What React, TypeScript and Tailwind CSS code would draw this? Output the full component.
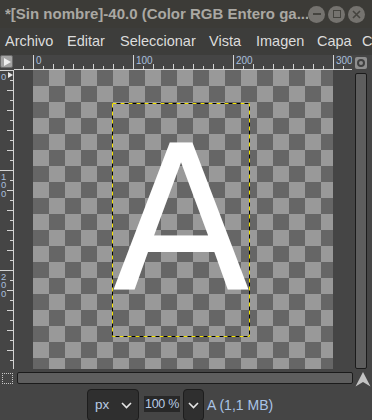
import React from "react";

const sans = "font-['Liberation_Sans',sans-serif]";

const menuItems = [
  { label: "Archivo", w: "w-[62px]" },
  { label: "Editar", w: "w-[53px]" },
  { label: "Seleccionar", w: "w-[89px]" },
  { label: "Vista", w: "w-[47px]" },
  { label: "Imagen", w: "w-[61px]" },
  { label: "Capa", w: "w-[45px]" },
  { label: "C", w: "w-[20px]" },
];

function TitleBar() {
  return (
    <div className="flex h-[28px] items-center bg-[#3c3b37] pl-[5px]">
      <span className="w-[303px] shrink-0 overflow-hidden whitespace-nowrap text-[15px] font-bold text-[#aaa8a3]">
        *[Sin nombre]-40.0 (Color RGB Entero ga...
      </span>
      <div className="flex gap-[3px]">
        <span className="flex h-[17px] w-[17px] items-center justify-center rounded-full bg-[#75736f]">
          <span className="h-[2px] w-[8px] bg-[#45443f]" />
        </span>
        <span className="flex h-[17px] w-[17px] items-center justify-center rounded-full bg-[#75736f]">
          <span className="h-[8px] w-[8px] border-[1.5px] border-[#45443f]" />
        </span>
        <span className="flex h-[17px] w-[17px] items-center justify-center rounded-full bg-[#75736f]">
          <svg width="9" height="9" viewBox="0 0 9 9">
            <path d="M1 1L8 8M8 1L1 8" stroke="#45443f" strokeWidth="1.6" />
          </svg>
        </span>
      </div>
    </div>
  );
}

function MenuBar() {
  return (
    <div className="flex h-[27px] items-center overflow-hidden whitespace-nowrap bg-[#3d3d3b] pl-[5px] text-[14.5px] text-[#dcdcdc]">
      {menuItems.map((m) => (
        <span key={m.label} className={`${m.w} shrink-0`}>
          {m.label}
        </span>
      ))}
    </div>
  );
}

function HRuler() {
  const ticks = [];
  const labels = [];
  for (let u = -10; u <= 318; u += 10) {
    const x = 19.5 + u;
    const y1 = u % 100 === 0 ? 0 : u % 20 === 0 ? 9 : 11;
    ticks.push(<line key={u} x1={x} x2={x} y1={y1} y2={14} />);
    if (u % 100 === 0) {
      labels.push(
        <text key={u} x={x + 2.5} y={9} fontSize="10">
          {u}
        </text>
      );
    }
  }
  return (
    <svg width="338" height="15" className="block">
      <g stroke="#d4d4d4" strokeWidth="1">
        {ticks}
        <line x1={0} x2={338} y1={14.5} y2={14.5} />
      </g>
      <g fill="#a9bfdc" fontFamily="Liberation Sans, sans-serif">
        {labels}
      </g>
    </svg>
  );
}

function VRuler() {
  const ticks = [];
  const labels = [];
  for (let u = 0; u <= 298; u += 10) {
    const y = 0.5 + u;
    const x1 = u % 100 === 0 ? 0 : u % 20 === 0 ? 7 : 10;
    ticks.push(<line key={u} x1={x1} x2={13} y1={y} y2={y} />);
    if (u % 100 === 0) {
      String(u)
        .split("")
        .forEach((d, i) => {
          labels.push(
            <text key={`${u}-${i}`} x={1} y={u + 9.5 + i * 8.5} fontSize="9.5">
              {d}
            </text>
          );
        });
    }
  }
  return (
    <svg width="14" height="299" className="block">
      <g stroke="#d4d4d4" strokeWidth="1">
        {ticks}
        <line x1={13.5} x2={13.5} y1={0} y2={299} />
      </g>
      <polygon points="8,2 13,5 8,8" fill="#e8e8e8" />
      <g fill="#a9bfdc" fontFamily="Liberation Sans, sans-serif">
        {labels}
      </g>
    </svg>
  );
}

function Canvas() {
  return (
    <div className="h-[299px] overflow-hidden bg-[#454545] pl-[19px]">
      <div className="relative h-[300px] w-[300px] bg-[conic-gradient(#999999_25%,#666666_0_50%,#999999_0_75%,#666666_0)] bg-[length:32px_32px]">
        <div className="absolute left-[79px] top-[33px] flex h-[234px] w-[138px] justify-center">
          <span className="mt-[16px] font-['DejaVu_Sans',sans-serif] text-[202px] leading-none text-white">
            A
          </span>
          <svg width="138" height="234" className="absolute inset-0">
            <rect x="0.5" y="0.5" width="137" height="233" fill="none" stroke="#000" />
            <rect
              x="0.5"
              y="0.5"
              width="137"
              height="233"
              fill="none"
              stroke="#f5e400"
              strokeDasharray="4 4"
            />
          </svg>
        </div>
      </div>
    </div>
  );
}

function Chevron() {
  return (
    <svg width="11" height="7" viewBox="0 0 11 7">
      <path d="M1 1L5.5 5.5L10 1" fill="none" stroke="#e6e6e6" strokeWidth="1.6" />
    </svg>
  );
}

function StatusBar() {
  return (
    <div className="flex h-[33px] items-start bg-[#454545] pl-[87px] pt-[2px]">
      <div className="flex h-[32px] w-[52px] items-center justify-between rounded-[4px] border border-[#1d1d1d] bg-[#2f2f2f] pl-[7px] pr-[6px]">
        <span className="text-[13.5px] text-[#b8cbe4]">px</span>
        <Chevron />
      </div>
      <div className="ml-[5px] mt-[7px] flex h-[16px] w-[36px] items-center justify-center whitespace-nowrap bg-[#282828] text-[12.5px] tracking-[-0.3px] text-[#b8cbe4]">
        100 %
      </div>
      <div className="ml-[3px] flex h-[32px] w-[21px] items-center justify-center rounded-[4px] border border-[#1d1d1d] bg-[#2f2f2f]">
        <Chevron />
      </div>
      <span className="ml-[3px] mt-[6px] whitespace-nowrap text-[14px] text-[#a9c4e6]">A (1,1 MB)</span>
    </div>
  );
}

export default function App() {
  return (
    <div className={`h-[420px] w-[372px] overflow-hidden bg-[#454545] ${sans}`}>
      <TitleBar />
      <MenuBar />
      <div className="grid grid-cols-[14px_338px_20px] grid-rows-[15px_299px_18px]">
        <div className="h-[13px] w-[13px] rounded-[2px] border border-[#6a6a6a] bg-[#a3a3a3] p-[2px]">
          <svg width="8" height="8" viewBox="0 0 8 8">
            <polygon points="1,0 8,4 1,8" fill="#f0f0f0" />
          </svg>
        </div>
        <HRuler />
        <div className="pl-[3px] pt-[2px]">
          <div className="flex h-[12px] w-[12px] items-center justify-center rounded-[2px] bg-[#8e8e8e]">
            <span className="h-[8px] w-[8px] rounded-full border-2 border-[#404040]" />
          </div>
        </div>

        <VRuler />
        <Canvas />
        <div className="pl-[3px] pt-[3px]">
          <div className="h-[296px] w-[12px] rounded-[2px] border border-[#1b1b1b] bg-[#5e5e5e]" />
        </div>

        <div className="pl-[2px] pt-[4px]">
          <div className="h-[11px] w-[11px] border border-dotted border-[#c8c8c8]" />
        </div>
        <div className="pl-[3px] pt-[3px]">
          <div className="h-[12px] w-[336px] rounded-[2px] border border-[#1b1b1b] bg-[#5e5e5e]" />
        </div>
        <div className="pl-[3px] pt-[3px]">
          <svg width="16" height="15" viewBox="0 0 16 15">
            <polygon points="8,0 15.5,14.5 8,10 0.5,14.5" fill="#c4c4c4" />
          </svg>
        </div>
      </div>
      <StatusBar />
    </div>
  );
}
